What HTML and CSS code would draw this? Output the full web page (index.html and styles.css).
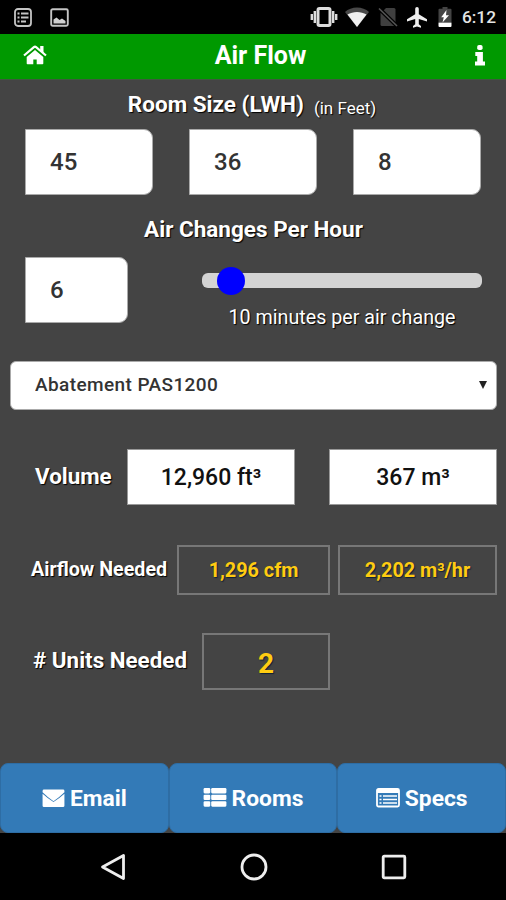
FILE: index.html
```html
<!DOCTYPE html>
<html lang="en">
<head>
    <meta charset="UTF-8">
    <meta name="viewport" content="width=device-width, initial-scale=1.0">
    <title>Air Flow</title>
    <link rel="stylesheet" href="styles.css">
</head>
<body>
    <div class="status-bar">
        <div class="status-left">
            <svg width="18" height="19" viewBox="0 0 18 19">
                <rect x="1" y="1" width="16" height="17" rx="3" fill="none" stroke="#c4c4c4" stroke-width="1.8"/>
                <path d="M3.500 5.500h2M7 5.500h7.500M3.500 9.500h2M7 9.500h7.500M3.500 13.500h2M7 13.500h5" stroke="#c4c4c4" stroke-width="2"/>
            </svg>
            <svg width="19" height="19" viewBox="0 0 19 19">
                <rect x="1.200" y="1.200" width="16.600" height="16.600" rx="1.500" fill="none" stroke="#c4c4c4" stroke-width="1.900"/>
                <path d="M3.500 15.500v-4l3-2 3 2.500 2.500-1.500 3.500 2.500v2.500z" fill="#d0d0d0"/>
            </svg>
        </div>
        <div class="status-right">
            <svg class="vibrate" width="28" height="20" viewBox="0 0 28 20">
                <rect x="8" y="1.500" width="12" height="17" rx="1.500" fill="none" stroke="#dcdcdc" stroke-width="3"/>
                <path d="M4.800 4v12M23.200 4v12M1.800 7v6M26.200 7v6" stroke="#dcdcdc" stroke-width="2.400"/>
            </svg>
            <svg class="wifi" width="24" height="20" viewBox="0 0 24 20">
                <path d="M12 20L0 5C6-1 18-1 24 5z" fill="#484848"/>
                <path d="M12 20L2.500 7.500C8 4 16 4 21.500 7.500z" fill="#f0f0f0"/>
            </svg>
            <svg class="no-sim" width="20" height="20" viewBox="0 0 20 20">
                <path d="M8 1h8q1.500 0 1.500 1.500v15q0 1.500-1.500 1.500H4q-1.500 0-1.500-1.500V6.500z" fill="#3f3f3f"/>
                <path d="M1 1.500L19 19" stroke="#000" stroke-width="4"/>
                <path d="M1 1.500L19 19" stroke="#555" stroke-width="1.600"/>
            </svg>
            <svg class="plane" width="20" height="21" viewBox="0 0 20 21">
                <path d="M20 14.500v-2.200L11.800 7.300V1.800a1.800 1.800 0 0 0-3.600 0v5.500L0 12.300v2.200l8.200-2.500v5.200L6 19v1.700l4-1.100 4 1.100V19l-2.200-1.800V12z" fill="#eee"/>
            </svg>
            <svg class="battery" width="14" height="20" viewBox="0 0 14 20">
                <path d="M4.500 0h5v1.700h3q1 0 1 1V15H.5V2.700q0-1 1-1h3z" fill="#444"/>
                <path d="M8.500 3L3.200 10.200h2.600L4.500 15.500 11 8.200H8z" fill="#fff"/>
                <path d="M.5 15.500h13V19q0 1-1 1h-11q-1 0-1-1z" fill="#fff"/>
            </svg>
            <span class="clock">6:12</span>
        </div>
    </div>

    <header>
        <svg width="24" height="20" viewBox="0 0 24 20">
            <path d="M12 5L3.700 11.900V18.500q0 .8.800.8h5.800V14.500h3.400v4.800h5.800q.8 0 .8-.8v-6.600z" fill="#fff"/>
            <path d="M1 10.500L10.900 2.200q1.100-.9 2.200 0L23 10.500" fill="none" stroke="#fff" stroke-width="2.200"/>
            <path d="M17.200 1h3.300v7.500l-3.300-2.800z" fill="#fff"/>
        </svg>
        <h1>Air Flow</h1>
        <svg width="10" height="21" viewBox="0 0 10 21">
            <rect x="2.200" y="0" width="5.400" height="5" rx="1.800" fill="#fff"/>
            <path d="M.3 7h7.600v9.400H10v4.100H0v-4.100h2.200v-5.400H.3z" fill="#fff"/>
        </svg>
    </header>

    <main>
        <h2 class="room-title">Room Size (LWH) <small>(in Feet)</small></h2>
        <div class="room-size">
            <input type="text" value="45" aria-label="Length">
            <input type="text" value="36" aria-label="Width">
            <input type="text" value="8" aria-label="Height">
        </div>

        <h2 class="ach-title">Air Changes Per Hour</h2>
        <div class="air-changes">
            <input type="text" id="ach" value="6" aria-label="Air changes per hour">
            <div class="slider">
                <input type="range" id="ach-range" min="0" max="100" value="6">
                <p>10 minutes per air change</p>
            </div>
        </div>

        <div class="unit-select">
            <select aria-label="Unit">
                <option>Abatement PAS1200</option>
            </select>
            <svg width="8" height="8" viewBox="0 0 8 8"><path d="M0 0h8L4 8z" fill="#222"/></svg>
        </div>

        <div class="result volume">
            <label>Volume</label>
            <output>12,960 ft³</output>
            <output>367 m³</output>
        </div>
        <div class="result airflow">
            <label>Airflow Needed</label>
            <output>1,296 cfm</output>
            <output>2,202 m³/hr</output>
        </div>
        <div class="result units">
            <label># Units Needed</label>
            <output>2</output>
        </div>
    </main>

    <footer>
        <button>
            <svg width="23" height="19" viewBox="0 0 24 20">
                <path d="M2 .5h20q1.500 0 1.500 1.500v1.500Q18 9 12 12.800 6 9 .5 3.500V2Q.5.500 2 .5z" fill="#fff"/>
                <path d="M.5 5Q6 10 12 13.800 18 10 23.500 5V17.500q0 1.500-1.500 1.500H2Q.5 19 .5 17.500z" fill="#fff"/>
            </svg>
            Email
        </button>
        <button>
            <svg class="list" width="24" height="19" viewBox="0 0 24 20" fill="#fff">
                <rect x="0" y="0" width="7" height="5.700" rx="1.200"/>
                <rect x="8" y="0" width="16" height="5.700" rx="1.200"/>
                <rect x="0" y="7" width="7" height="5.700" rx="1.200"/>
                <rect x="8" y="7" width="16" height="5.700" rx="1.200"/>
                <rect x="0" y="14" width="7" height="5.700" rx="1.200"/>
                <rect x="8" y="14" width="16" height="5.700" rx="1.200"/>
            </svg>
            Rooms
        </button>
        <button>
            <svg class="list" width="24" height="20" viewBox="0 0 24 20">
                <rect x="1" y="1" width="22" height="17.500" rx="1.500" fill="none" stroke="#fff" stroke-width="1.800"/>
                <path d="M1 1h22v4H1z" fill="#fff"/>
                <path d="M3.500 8h2M7 8h14M3.500 11.500h2M7 11.500h14M3.500 15h2M7 15h14" stroke="#fff" stroke-width="1.700"/>
            </svg>
            Specs
        </button>
    </footer>

    <nav>
        <svg width="26" height="28" viewBox="0 0 26 28"><path d="M23.500 2.500v23L2.500 14z" fill="none" stroke="#eee" stroke-width="2.800" stroke-linejoin="round"/></svg>
        <svg width="28" height="28" viewBox="0 0 28 28"><circle cx="14" cy="14" r="12" fill="none" stroke="#eee" stroke-width="2.800"/></svg>
        <svg width="26" height="26" viewBox="0 0 26 26"><rect x="2.200" y="2.200" width="21.600" height="21.600" rx="1" fill="none" stroke="#eee" stroke-width="2.800"/></svg>
    </nav>

    <script>
        const ach = document.getElementById('ach');
        const range = document.getElementById('ach-range');

        range.addEventListener('input', () => {
            ach.value = range.value;
        });
    </script>
</body>
</html>
```
FILE: styles.css
```css
* {
    box-sizing: border-box;
}

body {
    font-family: Roboto, sans-serif;
    margin: 0;
    height: 900px;
    display: flex;
    flex-direction: column;
    background-color: #444;
    color: #fff;
    overflow: hidden;
}

svg {
    display: block;
    flex-shrink: 0;
}

.status-bar {
    height: 34px;
    padding: 0 10px 0 14px;
    background-color: #000;
    display: flex;
    justify-content: space-between;
    align-items: center;
}

.status-left, .status-right {
    display: flex;
    align-items: center;
}

.status-left {
    gap: 18px;
}

.wifi {
    margin-left: 7px;
}

.no-sim {
    margin-left: 9px;
}

.plane {
    margin-left: 9px;
}

.battery {
    margin-left: 11px;
}

.clock {
    margin-left: 10px;
    padding-top: 1px;
    font-size: 17.3px;
    font-weight: 500;
    line-height: 33px;
    color: #e4e4e4;
}

header {
    height: 46px;
    padding: 0 21px 3px 23px;
    background-color: #090;
    border-bottom: 1px solid #3d5a3d;
    display: flex;
    justify-content: space-between;
    align-items: center;
}

h1 {
    margin: 2px 1px 0 0;
    font-size: 25px;
    font-weight: 700;
    line-height: 30px;
}

main {
    flex: 1;
}

h2 {
    margin: 0;
    font-size: 22.5px;
    font-weight: 700;
    line-height: 28px;
    text-align: center;
    text-shadow: 1px 1px 1px #000;
}

.room-title {
    padding: 10px 2px 0 0;
    height: 49px;
    display: flex;
    justify-content: center;
    gap: 10px;
}

.room-title small {
    padding-top: 4px;
    font-size: 17px;
    font-weight: 400;
}

input[type="text"] {
    width: 128px;
    height: 66px;
    padding: 0 24px;
    border: 1px solid #aaa;
    border-radius: 0 9px 9px 0;
    background-color: #fff;
    color: #333;
    font-family: inherit;
    font-size: 24px;
    font-weight: 500;
}

.room-size {
    padding: 0 25px;
    display: flex;
    justify-content: space-between;
}

.ach-title {
    margin-top: 20px;
    padding-left: 1px;
}

.air-changes {
    margin-top: 14px;
    padding: 0 24px 0 25px;
    display: flex;
    justify-content: space-between;
}

.air-changes input[type="text"] {
    width: 103px;
}

.slider {
    width: 280px;
    height: 71px;
    padding-top: 9px;
}

.slider input {
    -webkit-appearance: none;
    appearance: none;
    display: block;
    width: 100%;
    height: 28px;
    margin: 0;
    background: none;
}

.slider input::-webkit-slider-runnable-track {
    height: 15px;
    border-radius: 6px;
    background-color: #d3d3d3;
}

.slider input::-webkit-slider-thumb {
    -webkit-appearance: none;
    width: 28px;
    height: 28px;
    margin-top: -6px;
    border-radius: 50%;
    background-color: #00f;
}

.slider p {
    margin: 12px 0 0;
    font-size: 19.7px;
    line-height: 24px;
    text-align: center;
    text-shadow: 1px 1px 1px #000;
}

.unit-select {
    position: relative;
    margin: 33px 9px 0 10px;
}

select {
    -webkit-appearance: none;
    appearance: none;
    display: block;
    width: 100%;
    height: 49px;
    padding: 0 24px 3px;
    border: 1px solid #aaa;
    border-radius: 6px;
    background-color: #fff;
    color: #333;
    font-family: inherit;
    font-size: 19px;
    font-weight: 500;
    letter-spacing: 0.4px;
}

.unit-select svg {
    position: absolute;
    right: 10px;
    top: 20px;
}

.result {
    padding-right: 9px;
    display: flex;
    align-items: center;
}

.result label {
    font-weight: 700;
    text-shadow: 1px 1px 1px #000;
    white-space: nowrap;
}

.result output {
    display: flex;
    align-items: center;
    justify-content: center;
    border: 2px solid #777;
}

.volume {
    margin-top: 39px;
    padding-left: 35px;
}

.volume label {
    width: 92px;
    padding-bottom: 2px;
    font-size: 22.4px;
}

.volume output {
    width: 168px;
    height: 56px;
    padding-top: 1px;
    border: 1px solid #999;
    background-color: #fff;
    color: #111;
    font-size: 23px;
    font-weight: 500;
}

.volume output + output {
    margin-left: auto;
}

.airflow {
    margin-top: 40px;
    padding-left: 31px;
}

.airflow label {
    width: 146px;
    padding-bottom: 2px;
    font-size: 19.7px;
}

.airflow output {
    width: 153px;
    height: 50px;
    color: #fc1;
    font-size: 19.8px;
    font-weight: 700;
    text-shadow: 1px 1px 1px #123;
}

.airflow output + output {
    width: 159px;
    margin-left: auto;
}

.units {
    margin-top: 38px;
    padding-left: 33px;
}

.units label {
    width: 169px;
    padding-bottom: 3px;
    font-size: 22.4px;
}

.units output {
    width: 128px;
    height: 57px;
    padding-top: 3px;
    color: #fc1;
    font-size: 28px;
    font-weight: 700;
    text-shadow: 1px 1px 1px #123;
}

footer {
    display: grid;
    grid-template-columns: repeat(3, 1fr);
    height: 70px;
    background-color: #444;
}

button {
    display: flex;
    align-items: center;
    justify-content: center;
    gap: 5px;
    padding: 1px 0 0;
    border: 1px solid #2e6da4;
    border-radius: 8px;
    background-color: #337ab7;
    color: #fff;
    font-family: inherit;
    font-size: 22.8px;
    font-weight: 700;
}

button .list {
    margin-bottom: 2px;
}

nav {
    height: 67px;
    padding: 0 99px 0 100px;
    background-color: #000;
    display: flex;
    align-items: center;
    justify-content: space-between;
}
```
